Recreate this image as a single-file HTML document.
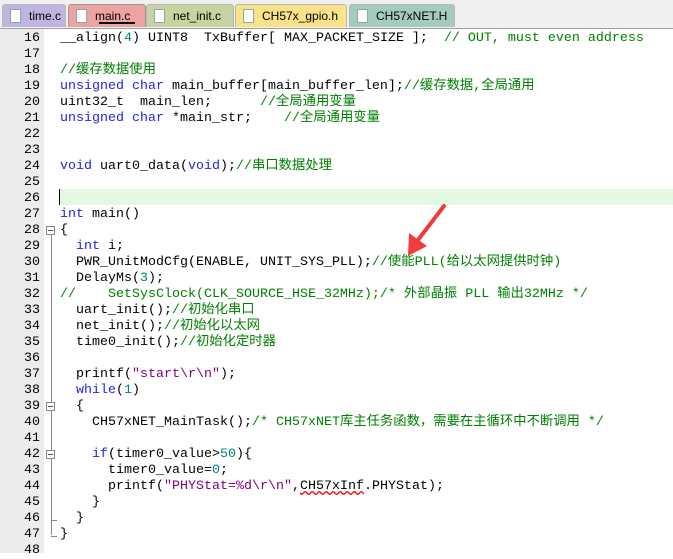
<!DOCTYPE html>
<html><head><meta charset="utf-8"><style>
body{margin:0;width:673px;height:553px;overflow:hidden;background:#fff;position:relative;font-family:"Liberation Sans","Noto Sans CJK SC",sans-serif}
.tabs{position:absolute;left:0;top:0;width:673px;height:28px;background:#f0f0f0;border-bottom:1px solid #a0a0a0}
.tab{position:absolute;top:4px;height:23px;font-size:12px;line-height:23px;color:#000;border:1px solid #b8b8b8;border-bottom:none;border-radius:3px 3px 0 0;box-sizing:border-box;padding-left:26px}
.tab i{position:absolute;left:7px;top:4px;width:11px;height:14px;background:#fff;border:1px solid #8aa;box-sizing:border-box}
.gut{position:absolute;left:0;top:29px;width:44px;height:524px;background:#ececec}
.fold{position:absolute;left:44px;top:29px;width:14px;height:524px;background:#fff}
.code{position:absolute;left:0;top:31px;width:673px;font-family:"Liberation Mono","Noto Sans CJK SC",monospace;font-size:13.33px;line-height:16px}
.l{height:16px;position:relative;overflow:visible}
.n{position:absolute;left:0;width:40px;text-align:right;color:#000}
.t{position:absolute;left:60px;color:#000;white-space:pre}
.k{color:#2323e6}.c{color:#008000}.d{color:#008080}.s{color:#800080}
.box{position:absolute;left:46px;width:9px;height:9px;border:1px solid #888;background:#fff;box-sizing:border-box}
.box:after{content:"";position:absolute;left:1px;top:3px;width:5px;height:1px;background:#555}
</style></head><body>
<div class="tabs">
<div class="tab" style="left:2px;width:64px;background:#c2b4e2">time.c<i></i></div>
<div class="tab" style="left:68px;width:78px;background:#eba3a3;border-color:#999">main.c<i></i><span style="position:absolute;left:30px;bottom:3px;width:36px;height:2px;background:#000"></span></div>
<div class="tab" style="left:146px;width:88px;background:#c7d4a2">net_init.c<i></i></div>
<div class="tab" style="left:235px;width:112px;background:#fae289">CH57x_gpio.h<i></i></div>
<div class="tab" style="left:349px;width:106px;background:#a4cbbd">CH57xNET.H<i></i></div>
</div>
<div class="gut"></div><div class="fold"></div>
<div style="position:absolute;left:59px;top:189px;width:614px;height:16px;background:#e2f8e2"></div>
<div style="position:absolute;left:59px;top:189px;width:1px;height:16px;background:#000"></div>
<div style="position:absolute;left:51px;top:235px;width:1px;height:300px;background:#888"></div>
<div style="position:absolute;left:51px;top:520px;width:6px;height:1px;background:#888"></div>
<div style="position:absolute;left:51px;top:536px;width:6px;height:1px;background:#888"></div>
<div class="box" style="top:226px"></div>
<div class="box" style="top:402px"></div>
<div class="box" style="top:450px"></div>
<div class="code"><div class="l"><span class="n">16</span><span class="t">__align(<span class="d">4</span>) UINT8  TxBuffer[ MAX_PACKET_SIZE ];  <span class="c">// OUT, must even address</span></span></div><div class="l"><span class="n">17</span></div><div class="l"><span class="n">18</span><span class="t c">//缓存数据使用</span></div><div class="l"><span class="n">19</span><span class="t"><span class="k">unsigned char</span> main_buffer[main_buffer_len];<span class="c">//缓存数据,全局通用</span></span></div><div class="l"><span class="n">20</span><span class="t">uint32_t  main_len;      <span class="c">//全局通用变量</span></span></div><div class="l"><span class="n">21</span><span class="t"><span class="k">unsigned char</span> *main_str;    <span class="c">//全局通用变量</span></span></div><div class="l"><span class="n">22</span></div><div class="l"><span class="n">23</span></div><div class="l"><span class="n">24</span><span class="t"><span class="k">void</span> uart0_data(<span class="k">void</span>);<span class="c">//串口数据处理</span></span></div><div class="l"><span class="n">25</span></div><div class="l"><span class="n">26</span></div><div class="l"><span class="n">27</span><span class="t"><span class="k">int</span> main()</span></div><div class="l"><span class="n">28</span><span class="t">{</span></div><div class="l"><span class="n">29</span><span class="t">  <span class="k">int</span> i;</span></div><div class="l"><span class="n">30</span><span class="t">  PWR_UnitModCfg(ENABLE, UNIT_SYS_PLL);<span class="c">//使能PLL(给以太网提供时钟)</span></span></div><div class="l"><span class="n">31</span><span class="t">  DelayMs(<span class="d">3</span>);</span></div><div class="l"><span class="n">32</span><span class="t c">//    SetSysClock(CLK_SOURCE_HSE_32MHz);/* 外部晶振 PLL 输出32MHz */</span></div><div class="l"><span class="n">33</span><span class="t">  uart_init();<span class="c">//初始化串口</span></span></div><div class="l"><span class="n">34</span><span class="t">  net_init();<span class="c">//初始化以太网</span></span></div><div class="l"><span class="n">35</span><span class="t">  time0_init();<span class="c">//初始化定时器</span></span></div><div class="l"><span class="n">36</span></div><div class="l"><span class="n">37</span><span class="t">  printf(<span class="s">"start\r\n"</span>);</span></div><div class="l"><span class="n">38</span><span class="t">  <span class="k">while</span>(<span class="d">1</span>)</span></div><div class="l"><span class="n">39</span><span class="t">  {</span></div><div class="l"><span class="n">40</span><span class="t">    CH57xNET_MainTask();<span class="c">/* CH57xNET库主任务函数，需要在主循环中不断调用 */</span></span></div><div class="l"><span class="n">41</span></div><div class="l"><span class="n">42</span><span class="t">    <span class="k">if</span>(timer0_value&gt;<span class="d">50</span>){</span></div><div class="l"><span class="n">43</span><span class="t">      timer0_value=<span class="d">0</span>;</span></div><div class="l"><span class="n">44</span><span class="t">      printf(<span class="s">"PHYStat=%d\r\n"</span>,<span style="text-decoration:underline wavy red">CH57xInf</span>.PHYStat);</span></div><div class="l"><span class="n">45</span><span class="t">    }</span></div><div class="l"><span class="n">46</span><span class="t">  }</span></div><div class="l"><span class="n">47</span><span class="t">}</span></div><div class="l"><span class="n">48</span></div></div>
<svg style="position:absolute;left:0;top:0" width="673" height="553">
<line x1="444" y1="206" x2="418" y2="240" stroke="#f03c3c" stroke-width="4" stroke-linecap="round"/>
<polygon points="408,256 409,233 427,246" fill="#f03c3c"/>
</svg>
</body></html>
